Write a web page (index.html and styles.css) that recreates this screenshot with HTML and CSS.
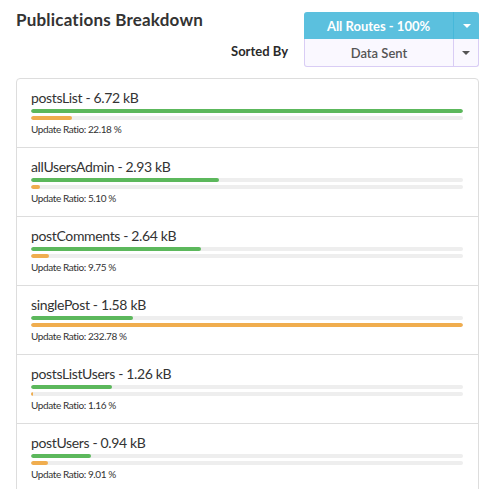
FILE: index.html
```html
<!DOCTYPE html>
<html>
<head>
<meta charset="utf-8">
<link rel="stylesheet" href="styles.css">
</head>
<body>
<div class="header">
  <h1 class="title">Publications Breakdown</h1>
  <div class="controls">
    <div class="btn-group">
      <div class="btn-main">All Routes - 100%</div>
      <div class="btn-caret"><span class="caret white"></span></div>
    </div>
    <div class="sort-row">
      <span class="sort-label">Sorted By</span>
      <div class="select">
        <div class="select-main">Data Sent</div>
        <div class="select-caret"><span class="caret dark"></span></div>
      </div>
    </div>
  </div>
</div>
<div class="panel">
  <div class="item">
    <div class="name">postsList - 6.72 kB</div>
    <div class="track"><div class="fill green" style="width:100%"></div></div>
    <div class="track"><div class="fill orange" style="width:9.53%"></div></div>
    <div class="ratio">Update Ratio: 22.18 %</div>
  </div>
  <div class="item">
    <div class="name">allUsersAdmin - 2.93 kB</div>
    <div class="track"><div class="fill green" style="width:43.6%"></div></div>
    <div class="track"><div class="fill orange" style="width:2.19%"></div></div>
    <div class="ratio">Update Ratio: 5.10 %</div>
  </div>
  <div class="item">
    <div class="name">postComments - 2.64 kB</div>
    <div class="track"><div class="fill green" style="width:39.3%"></div></div>
    <div class="track"><div class="fill orange" style="width:4.19%"></div></div>
    <div class="ratio">Update Ratio: 9.75 %</div>
  </div>
  <div class="item">
    <div class="name">singlePost - 1.58 kB</div>
    <div class="track"><div class="fill green" style="width:23.5%"></div></div>
    <div class="track"><div class="fill orange" style="width:100%"></div></div>
    <div class="ratio">Update Ratio: 232.78 %</div>
  </div>
  <div class="item">
    <div class="name">postsListUsers - 1.26 kB</div>
    <div class="track"><div class="fill green" style="width:18.75%"></div></div>
    <div class="track"><div class="fill orange" style="width:0.5%"></div></div>
    <div class="ratio">Update Ratio: 1.16 %</div>
  </div>
  <div class="item">
    <div class="name">postUsers - 0.94 kB</div>
    <div class="track"><div class="fill green" style="width:14%"></div></div>
    <div class="track"><div class="fill orange" style="width:3.87%"></div></div>
    <div class="ratio">Update Ratio: 9.01 %</div>
  </div>
</div>
</body>
</html>
```
FILE: styles.css
```css
* { box-sizing: border-box; }
html, body { margin: 0; padding: 0; background: #fff; }
body {
  padding: 12px 16px 0 16px;
  font-family: "Lato", "Open Sans", sans-serif;
  color: #333;
  overflow: hidden;
  height: 489px;
}
.header {
  display: flex;
  justify-content: space-between;
  align-items: flex-start;
}
.title {
  margin: -2px 0 0 0;
  font-size: 17px;
  font-weight: 700;
  line-height: 20px;
  letter-spacing: 0.2px;
  color: #333;
}
.controls {
  display: flex;
  flex-direction: column;
  align-items: flex-end;
}
.btn-group {
  display: flex;
  width: 175px;
  height: 27px;
  background: #5bc0de;
  border-radius: 3px 3px 0 0;
  color: #fff;
  font-weight: 700;
  font-size: 13px;
}
.btn-main {
  flex: 1;
  display: flex;
  align-items: center;
  justify-content: center;
  border-right: 1px solid #46b8da;
}
.btn-caret {
  width: 25px;
  display: flex;
  align-items: center;
  justify-content: center;
}
.caret {
  width: 0; height: 0;
  border-left: 4px solid transparent;
  border-right: 4px solid transparent;
  border-top: 4px solid #fff;
}
.caret.dark { border-top-color: #555; }
.sort-row {
  display: flex;
  align-items: center;
}
.sort-label {
  font-weight: 700;
  font-size: 13px;
  margin-right: 16px;
  margin-top: -5px;
  color: #2a2a2a;
}
.select {
  display: flex;
  width: 175px;
  height: 28px;
  background: #faf8ff;
  border: 1px solid #d9cdf5;
  border-top: none;
  border-radius: 0 0 3px 3px;
  font-size: 13px;
  font-weight: 600;
  color: #555;
}
.select-main {
  flex: 1;
  display: flex;
  align-items: center;
  justify-content: center;
  border-right: 1px solid #d9cdf5;
}
.select-caret {
  width: 24px;
  display: flex;
  align-items: center;
  justify-content: center;
}
.panel {
  margin-top: 11px;
  border: 1px solid #ddd;
  border-radius: 4px;
  width: 463px;
}
.item {
  height: 69px;
  padding: 10px 15px 0 14px;
  border-bottom: 1px solid #ddd;
}
.name {
  font-size: 14px;
  line-height: 17px;
  letter-spacing: -0.35px;
  color: #333;
  margin-bottom: 3px;
}
.track {
  height: 4px;
  background: #eee;
  border-radius: 2px;
  margin-bottom: 3px;
  overflow: hidden;
}
.fill { height: 100%; border-radius: 2px; }
.fill.green { background: #5cb85c; }
.fill.orange { background: #f0ad4e; }
.ratio {
  font-size: 10px;
  line-height: 12px;
  letter-spacing: -0.4px;
  margin-top: 0;
  color: #333;
}
```
